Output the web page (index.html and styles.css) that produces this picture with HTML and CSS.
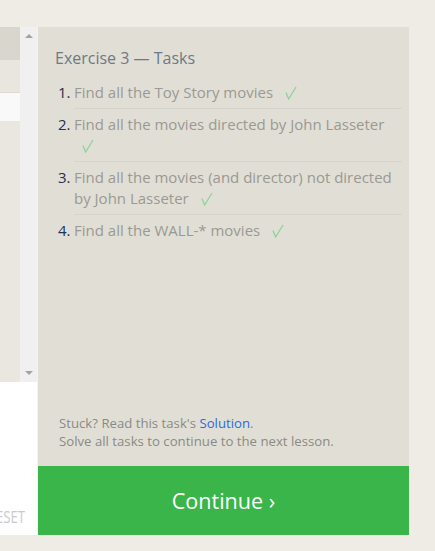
FILE: index.html
```html
<!DOCTYPE html>
<html>
<head>
<meta charset="utf-8">
<link rel="stylesheet" href="styles.css">
</head>
<body>
<div class="page">
  <div class="editor">
    <div class="results">
      <div class="results-body">
        <div class="row head"></div>
        <div class="row sub"></div>
        <div class="row light"></div>
        <div class="rest"></div>
      </div>
      <div class="scrollbar">
        <span class="arrow up"></span>
        <span class="arrow down"></span>
      </div>
    </div>
    <div class="input">
      <span class="reset">RESET</span>
    </div>
  </div>
  <div class="panel">
    <h2 class="title">Exercise 3 — Tasks</h2>
    <ol class="tasks">
      <li><span class="num">1.</span><div class="txt">Find all the Toy Story movies <svg class="check" width="12" height="14" viewBox="0 0 12 14"><path d="M1 6.5 L3.6 13 L11 1"/></svg></div></li>
      <li><span class="num">2.</span><div class="txt">Find all the movies directed by John Lasseter <svg class="check" width="12" height="14" viewBox="0 0 12 14"><path d="M1 6.5 L3.6 13 L11 1"/></svg></div></li>
      <li><span class="num">3.</span><div class="txt">Find all the movies (and director) not directed by John Lasseter <svg class="check" width="12" height="14" viewBox="0 0 12 14"><path d="M1 6.5 L3.6 13 L11 1"/></svg></div></li>
      <li class="last"><span class="num">4.</span><div class="txt">Find all the WALL-* movies <svg class="check" width="12" height="14" viewBox="0 0 12 14"><path d="M1 6.5 L3.6 13 L11 1"/></svg></div></li>
    </ol>
    <div class="spacer"></div>
    <div class="help">
      <div>Stuck? Read this task's <a class="link">Solution</a>.</div>
      <div>Solve all tasks to continue to the next lesson.</div>
    </div>
    <div class="continue">Continue ›</div>
  </div>
</div>
</body>
</html>
```

FILE: styles.css
```css
html, body {
  margin: 0;
  padding: 0;
  background: #efece5;
  font-family: "Open Sans", "Noto Sans", sans-serif;
}

.page {
  display: flex;
  padding-top: 27px;
  height: 508px;
}

.editor {
  width: 37px;
  border-right: 1px solid #f4f3ef;
  display: flex;
  flex-direction: column;
  flex: none;
}

.results {
  height: 355px;
  display: flex;
  flex: none;
}

.results-body {
  flex: 1;
  display: flex;
  flex-direction: column;
  background: #e9e7df;
}

.row.head {
  height: 33px;
  background: #d9d7cd;
}

.row.sub {
  height: 32px;
  background: #e8e6de;
  border-bottom: 1px solid #dcdad2;
}

.row.light {
  height: 28px;
  background: #f9f9f9;
}

.rest {
  flex: 1;
}

.scrollbar {
  width: 17px;
  background: #f0f0f0;
  display: flex;
  flex-direction: column;
  justify-content: space-between;
  align-items: center;
  padding: 7px 0 7px;
  box-sizing: border-box;
}

.arrow {
  width: 0;
  height: 0;
  border-left: 4px solid transparent;
  border-right: 4px solid transparent;
}

.arrow.up {
  border-bottom: 4px solid #a3a3a3;
}

.arrow.down {
  border-top: 4px solid #a3a3a3;
}

.input {
  flex: 1;
  background: #ffffff;
  display: flex;
  justify-content: flex-end;
  align-items: flex-end;
  overflow: hidden;
  padding: 0 12px 8px 0;
}

.reset {
  display: inline-block;
  font-size: 17px;
  line-height: 20px;
  color: #c9c9d1;
  white-space: nowrap;
  transform: scaleX(0.78);
  transform-origin: right center;
}

.panel {
  width: 371px;
  flex: none;
  background: #e1dfd5;
  display: flex;
  flex-direction: column;
}

.title {
  margin: 0;
  padding: 20px 17px 0;
  font-size: 16px;
  font-weight: normal;
  line-height: 22px;
  color: #6e7987;
}

.tasks {
  list-style: none;
  margin: 8px 7px 0 20px;
  padding: 0;
  font-size: 15px;
  line-height: 21px;
}

.tasks li {
  display: flex;
}

.num {
  width: 16px;
  flex: none;
  padding-top: 5px;
  color: #26304f;
}

.txt {
  flex: 1;
  padding: 5px 0;
  color: #9a9994;
  border-bottom: 1px solid #d6d4ca;
}

.tasks li.last .txt {
  border-bottom: none;
}

.check {
  margin-left: 8px;
  vertical-align: -2px;
}

.check path {
  fill: none;
  stroke: #8fd39c;
  stroke-width: 1.3;
}

.spacer {
  flex: 1;
}

.help {
  padding: 0 21px;
  font-size: 13.2px;
  line-height: 18px;
  color: #8a8a86;
  margin-bottom: 16px;
}

.link {
  color: #2f66e0;
}

.continue {
  height: 69px;
  background: #39b54a;
  color: #ffffff;
  font-size: 21.6px;
  display: flex;
  align-items: center;
  justify-content: center;
}
```
